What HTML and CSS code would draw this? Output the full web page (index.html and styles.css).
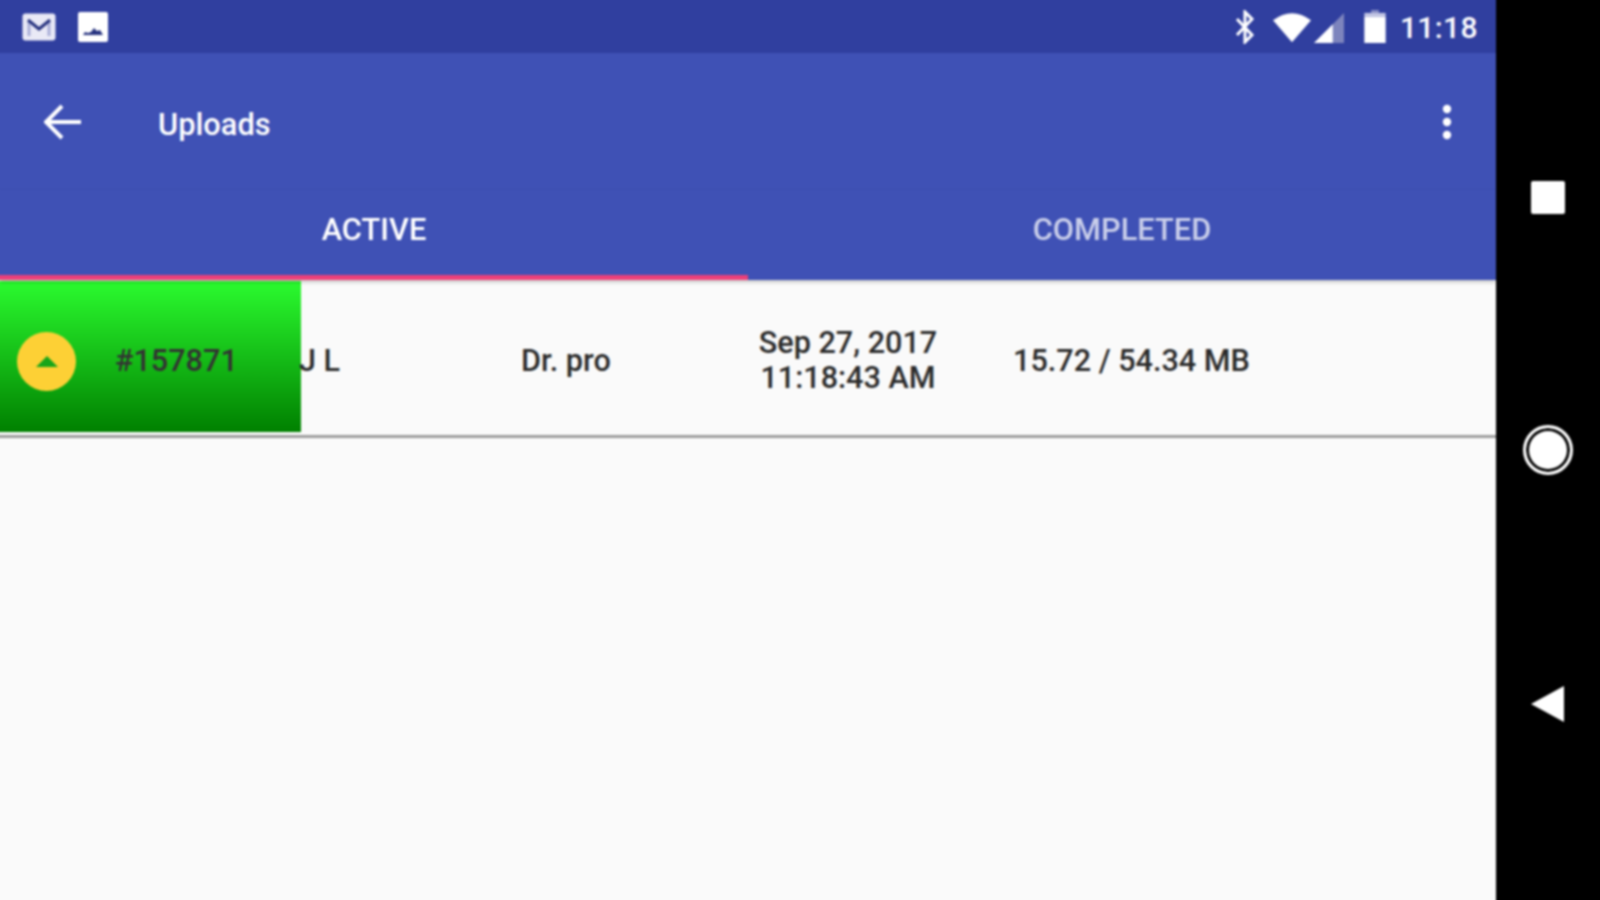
FILE: index.html
```html
<!DOCTYPE html>
<html lang="en">
<head>
<meta charset="utf-8">
<title>Uploads</title>
<link rel="stylesheet" href="styles.css">
</head>
<body>
<div class="device">
  <main class="screen">
    <header class="statusbar">
      <div class="notifs">
        <svg class="ic-mail" viewBox="0 0 34 28"><rect x="0.5" y="0.5" width="33" height="27" rx="3" fill="#e9e9f6"/><path d="M7 23V8M27 23V8" fill="none" stroke="#a9aed8" stroke-width="3"/><path d="M6 7l11 9 11-9" fill="none" stroke="#27337f" stroke-width="3"/></svg>
        <svg class="ic-img" viewBox="0 0 30 30"><rect width="30" height="30" rx="2" fill="#fff"/><path d="M5 23l2-3 3 1 3-1 3-4 3 3 3-1 3 5z" fill="#27337f"/></svg>
      </div>
      <div class="sysicons">
        <svg class="ic-bt" viewBox="0 0 24 34"><path d="M4 9l15 16-7 7V2l7 7L4 25" fill="none" stroke="#fff" stroke-width="3"/></svg>
        <svg class="ic-wifi" viewBox="0 0 40 32"><path d="M0 9Q20-6 40 9L20 32z" fill="#fff"/></svg>
        <svg class="ic-signal" viewBox="0 0 32 32"><path d="M32 0V32H0z" fill="#7d84bd"/><path d="M20 12V32H0z" fill="#fff"/></svg>
        <svg class="ic-batt" viewBox="0 0 24 34"><path d="M8 0h8v3H8z" fill="#8b90c6"/><path d="M1 3h22v4H1z" fill="#c4c7e4"/><path d="M1 7h22v27H1z" fill="#fff"/></svg>
        <span class="clock">11:18</span>
      </div>
    </header>
    <div class="toolbar">
      <svg class="ic-back" viewBox="0 0 38 36"><path d="M2 18h35M18 2L2 18l16 16" fill="none" stroke="#fff" stroke-width="4"/></svg>
      <h1 class="title">Uploads</h1>
      <svg class="ic-more" viewBox="0 0 12 36"><circle cx="6" cy="5" r="4.2" fill="#fff"/><circle cx="6" cy="18" r="4.2" fill="#fff"/><circle cx="6" cy="31" r="4.2" fill="#fff"/></svg>
    </div>
    <nav class="tabs">
      <div class="tab tab-active">ACTIVE</div>
      <div class="tab">COMPLETED</div>
    </nav>
    <section class="list">
      <div class="row">
        <div class="progress" style="width:307px"></div>
        <div class="badge"><span class="arrow"></span></div>
        <div class="cell cell-id">#157871</div>
        <div class="cell cell-name">J L</div>
        <div class="cell cell-doc">Dr. pro</div>
        <div class="cell cell-date">Sep 27, 2017<br>11:18:43 AM</div>
        <div class="cell cell-size">15.72 / 54.34 MB</div>
      </div>
    </section>
  </main>
  <aside class="navbar">
    <span class="nav-square"></span>
    <span class="nav-home"></span>
    <svg class="nav-back" viewBox="0 0 34 36"><path d="M33 0V36L0 18z" fill="#fff"/></svg>
  </aside>
</div>
</body>
</html>
```
FILE: styles.css
```css
* { box-sizing: border-box; }
html, body { margin: 0; height: 100%; background: #000; }
body { font-family: Roboto, "Liberation Sans", sans-serif; overflow: hidden; }
.device { display: flex; width: 1600px; height: 900px; filter: blur(0.8px); }
.screen { width: 1496px; display: flex; flex-direction: column; background: #fafafa; }

/* the box-shadows carry each band past the window edge so the soft filter leaves no dark rim */
.statusbar { height: 53px; background: #303f9f; box-shadow: -6px 0 0 #303f9f, 0 -6px 0 #303f9f, -6px -6px 0 #303f9f; display: flex; align-items: center; justify-content: space-between; padding: 0 18px 0 22px; flex: none; position: relative; }
.notifs { display: flex; align-items: center; gap: 22px; }
.ic-mail { width: 34px; height: 28px; display: block; }
.ic-img { width: 30px; height: 30px; display: block; }
.sysicons { display: flex; align-items: center; }
.ic-bt { width: 24px; height: 34px; display: block; margin-right: 16px; margin-left: -3px; }
.ic-wifi { width: 38px; height: 32px; display: block; margin-right: 3px; }
.ic-signal { width: 30px; height: 30px; display: block; margin-right: 19px; margin-top: 3px; }
.ic-batt { width: 24px; height: 33px; display: block; margin-right: 13px; }
.clock { color: #fff; font-size: 30px; font-weight: 500; letter-spacing: 0.4px; line-height: 34px; padding-top: 3px; }

.toolbar { height: 137px; background: #3f51b5; box-shadow: -6px 0 0 #3f51b5; display: flex; align-items: center; padding: 0 0 0 44px; flex: none; position: relative; }
.ic-back { width: 38px; height: 36px; display: block; margin-top: 1px; }
.title { margin: 6px 0 0 76px; flex: 1; color: #fff; font-size: 30.8px; font-weight: 500; line-height: 34px; }
.ic-more { width: 12px; height: 36px; display: block; margin-right: 43px; margin-top: 1px; }

.tabs { height: 90px; background: #3f51b5; display: flex; flex: none; box-shadow: 0 2px 4px rgba(0,0,0,.22); position: relative; z-index: 1; }
.tab { flex: 1; display: flex; align-items: flex-start; justify-content: center; padding-top: 23px; color: rgba(255,255,255,.72); font-size: 30.8px; font-weight: 500; line-height: 34px; }
.tab-active { flex: none; width: 754px; margin-left: -6px; padding-left: 6px; background: #3f51b5; color: #fff; border-bottom: 5px solid #ec407a; }

.list { flex: 1; background: #fafafa; box-shadow: -6px 0 0 #fafafa, 0 6px 0 #fafafa, -6px 6px 0 #fafafa; }
.row { position: relative; display: flex; align-items: center; height: 158px; margin-left: -6px; padding: 8px 0 0 23px; border-bottom: 3px solid #9e9e9e; }
.progress { position: absolute; left: 0; top: 1px; height: 151px; background: linear-gradient(#2bfb2f, #008000); }
.badge { position: relative; width: 59px; height: 59px; border-radius: 50%; background: #fdd035; display: flex; align-items: center; justify-content: center; flex: none; }
.arrow { width: 0; height: 0; border-left: 11px solid transparent; border-right: 11px solid transparent; border-bottom: 11px solid #19a519; }
.cell { position: relative; flex: none; color: #2b2b2b; font-size: 30.6px; font-weight: 500; line-height: 35px; white-space: nowrap; margin-top: -3px; }
.cell-id { width: 184px; margin-left: 39px; color: #333; }
.cell-name { width: 222px; }
.cell-doc { width: 162px; }
.cell-date { width: 330px; text-align: center; }

.navbar { flex: 1; background: #000; display: flex; flex-direction: column; align-items: center; padding-top: 181px; }
.nav-square { width: 34px; height: 33px; background: #fff; border-radius: 2px; }
.nav-home { width: 50px; height: 50px; margin-top: 211px; border-radius: 50%; background: #fff; border: 3px solid #fff; box-shadow: inset 0 0 0 3px #000; }
.nav-back { width: 34px; height: 36px; display: block; margin-top: 211px; }
```
